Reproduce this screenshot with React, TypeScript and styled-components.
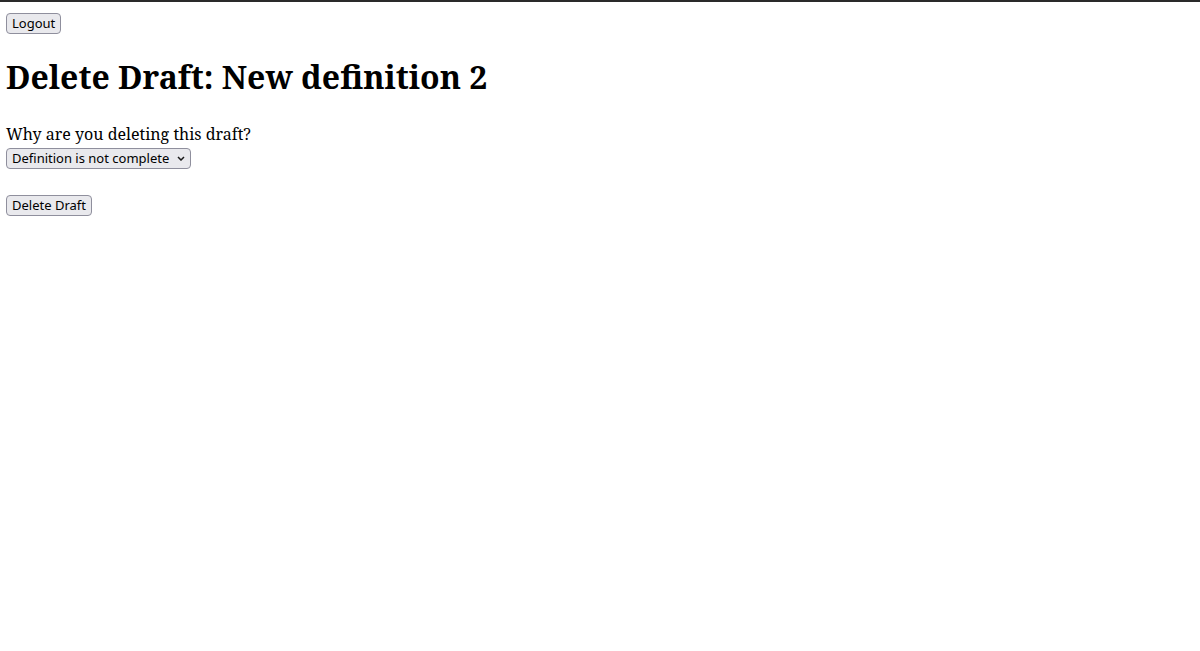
import React from "react";
import styled, { createGlobalStyle } from "styled-components";

const Global = createGlobalStyle`
  body {
    margin: 0;
    font-family: "Noto Serif", "DejaVu Serif", serif;
    background: #fff;
    color: #000;
  }
`;

const Page = styled.div`
  border-top: 2px solid #2a2a2a;
  padding: 9px 6px 6px;
`;

const Button = styled.button`
  box-sizing: border-box;
  font-family: "Noto Sans", sans-serif;
  font-size: 13px;
  line-height: 17px;
  padding: 1px 5px;
  border: 1px solid #8f8f9d;
  border-radius: 4px;
  background: #e9e9ed;
  color: #000;
  cursor: pointer;
  &:hover {
    background: #d0d0d7;
  }
`;

const Title = styled.h1`
  font-size: 32px;
  font-weight: bold;
  margin: 21px 0 25px;
`;

const Form = styled.form`
  display: flex;
  flex-direction: column;
  align-items: flex-start;
`;

const Label = styled.label`
  font-size: 16px;
`;

const SelectWrap = styled.span`
  position: relative;
  display: inline-flex;
  margin-top: 3px;
  margin-bottom: 26px;
`;

const Select = styled.select`
  appearance: none;
  box-sizing: border-box;
  font-family: "Noto Sans", sans-serif;
  font-size: 13px;
  line-height: 17px;
  padding: 1px 20px 1px 5px;
  border: 1px solid #8f8f9d;
  border-radius: 4px;
  background: #e9e9ed;
  color: #000;
`;

const Chevron = styled.svg`
  position: absolute;
  right: 6px;
  top: 8px;
  pointer-events: none;
`;

export default function App() {
  return (
    <>
      <Global />
      <Page>
        <Button type="button">Logout</Button>
        <Title>Delete Draft: New definition 2</Title>
        <Form onSubmit={(e) => e.preventDefault()}>
          <Label htmlFor="reason">Why are you deleting this draft?</Label>
          <SelectWrap>
            <Select id="reason" defaultValue="incomplete">
              <option value="incomplete">Definition is not complete</option>
              <option value="duplicate">Duplicate definition</option>
              <option value="other">Other</option>
            </Select>
            <Chevron width="8" height="5" viewBox="0 0 8 5">
              <polyline
                points="1,1 4,4 7,1"
                fill="none"
                stroke="#1a1a1a"
                strokeWidth="1.5"
              />
            </Chevron>
          </SelectWrap>
          <Button type="submit">Delete Draft</Button>
        </Form>
      </Page>
    </>
  );
}
